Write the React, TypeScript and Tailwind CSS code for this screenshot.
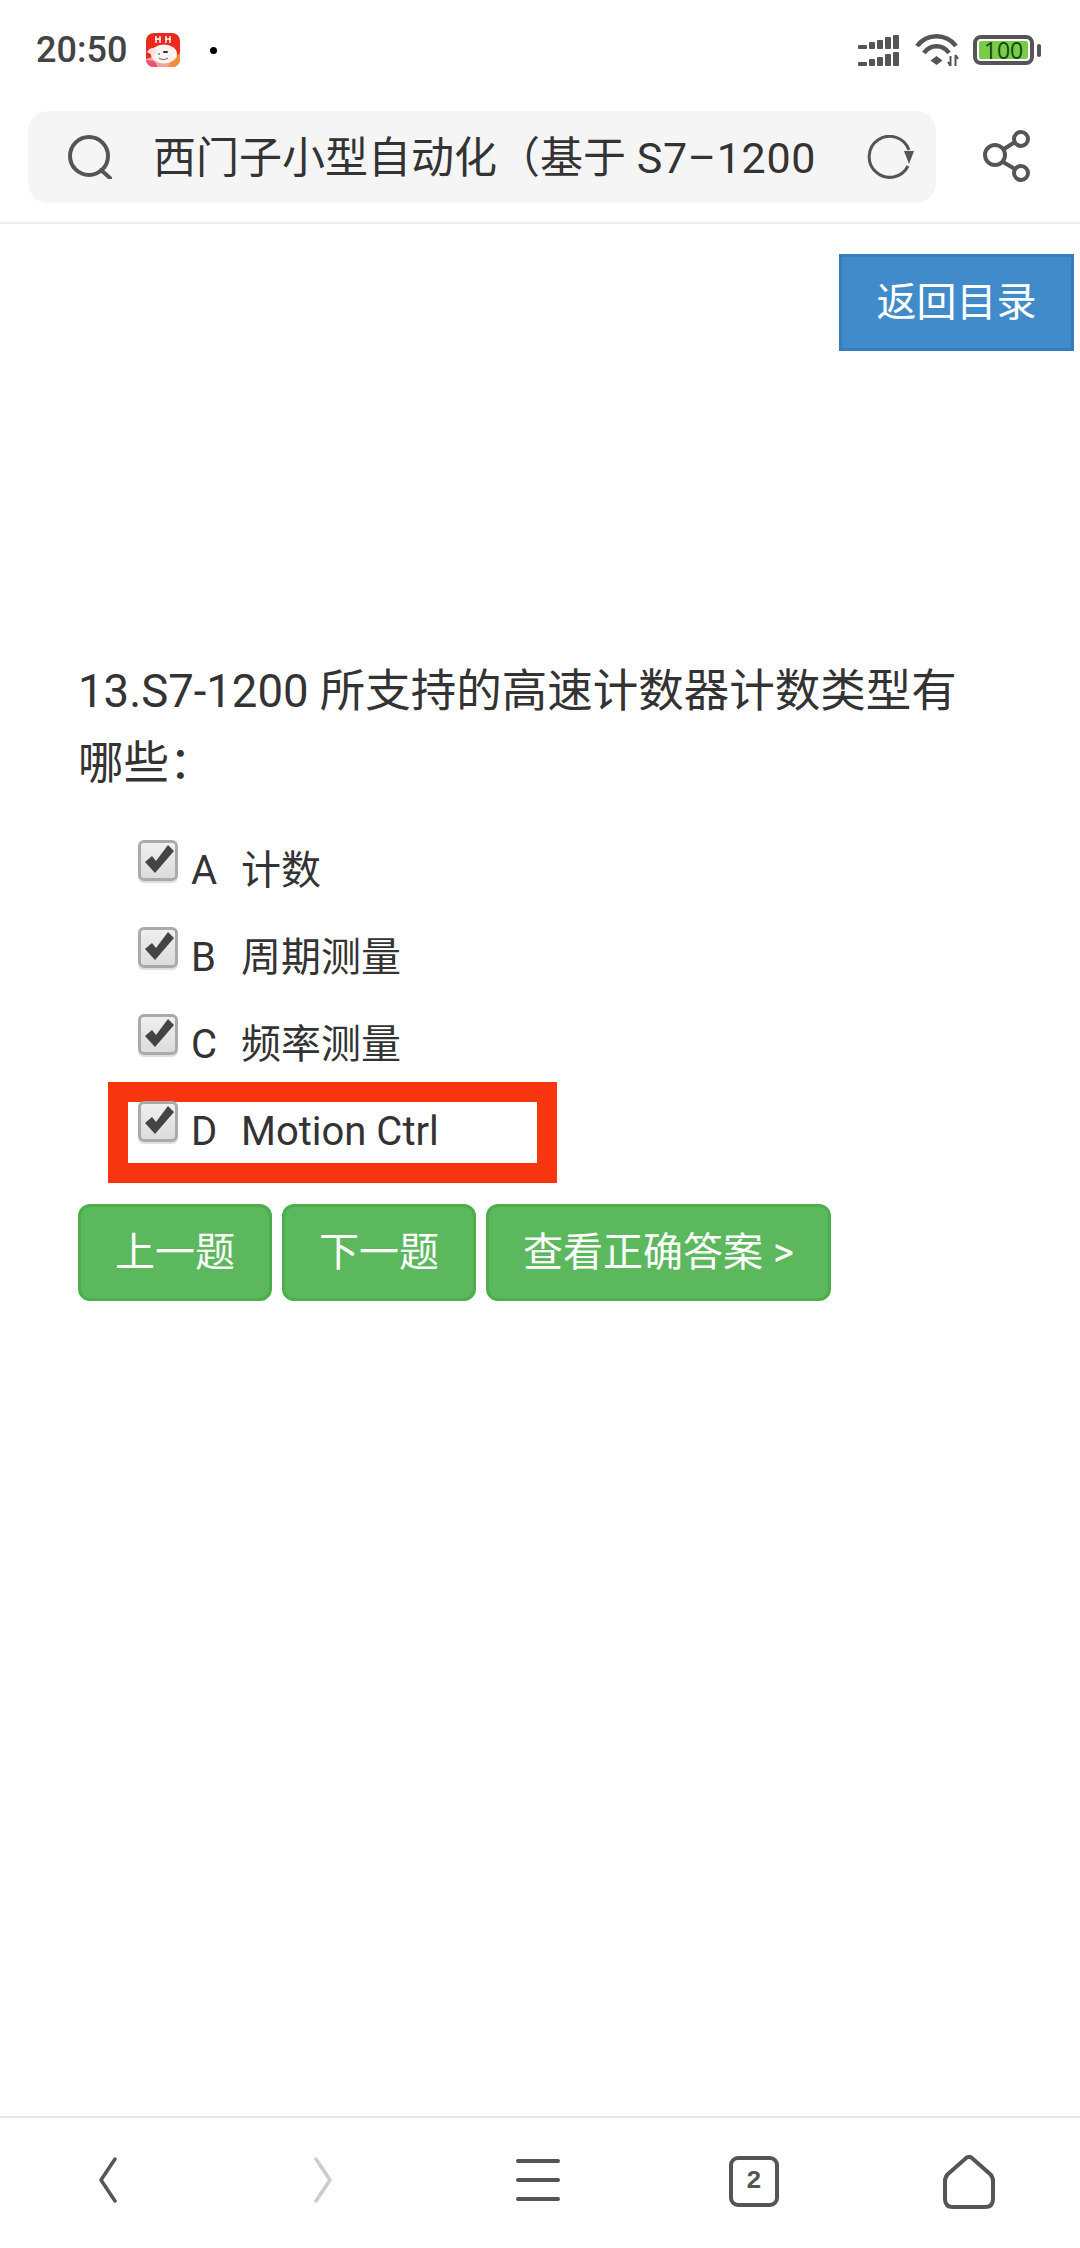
import React from "react";

const font = "font-['Roboto','Noto_Sans_CJK_SC',sans-serif]";

function Signal() {
  const heights = [4, 7, 9, 12, 14];
  const Row = () => (
    <div className="flex items-end gap-[2px] h-[14px]">
      {heights.map((h, i) => (
        <div
          key={i}
          className={`bg-[#555] rounded-[1px] ${i === 0 ? "w-[9px]" : "w-[6px]"}`}
          style={{ height: h }}
        />
      ))}
    </div>
  );
  return (
    <div className="flex flex-col gap-[3px] w-[41px]">
      <Row />
      <Row />
    </div>
  );
}

function Wifi() {
  return (
    <svg width="44" height="33" viewBox="0 0 44 33" fill="none" stroke="#555" strokeWidth="4.5">
      <path d="M2 12 C 12 -1, 31 -1, 41 12" />
      <path d="M9 19 C 15 10, 28 10, 34 19" />
      <path d="M21.5 22 L27.5 26.5 L21.5 31 L15.5 26.5 Z" fill="#555" stroke="none" />
      <path d="M35.5 22 V32 M33 28 L35.5 32 M40.5 21 V32 M40.5 21 L43 25" strokeWidth="2" />
    </svg>
  );
}

function Battery() {
  return (
    <div className="flex items-center gap-[3px]">
      <div className="w-[61px] h-[30px] border-[4px] border-[#555] rounded-[8px] p-[2px]">
        <div className="w-full h-full bg-[#7ccb46] rounded-[2px] flex items-center justify-center text-[23px] leading-none text-[#0b4a12] font-['Open_Sans',sans-serif]">
          100
        </div>
      </div>
      <div className="w-[4px] h-[13px] bg-[#555] rounded-[2px]" />
    </div>
  );
}

function AppIcon() {
  return (
    <svg width="34" height="34" viewBox="0 0 34 34">
      <defs>
        <clipPath id="appclip">
          <rect width="34" height="34" rx="8" />
        </clipPath>
      </defs>
      <g clipPath="url(#appclip)">
        <rect width="34" height="34" fill="#ea2a1c" />
        <path d="M0 26 L12 22 L34 24 V34 H0 Z" fill="#f7a39a" />
        <path d="M26 26 L34 20 V34 H22 Z" fill="#f58a3c" />
        <path d="M0 27 L8 28 L12 34 H0 Z" fill="#ec4f7a" />
        <ellipse cx="18" cy="21" rx="13" ry="9.5" fill="#fbf3f0" />
        <path d="M1 19 C 4 14, 9 14, 11 18 L 8 23 Z" fill="#fbe0dc" />
        <path d="M10 3 V10 M14 3 V10 M9 6 H15 M20 3 V10 M24 3 V10 M19 6 H25" stroke="#fff" strokeWidth="1.4" fill="none" />
        <rect x="17" y="18" width="5" height="2" rx="1" fill="#333" />
        <circle cx="13" cy="21" r="0.8" fill="#333" />
        <path d="M13 25 C 16 27, 19 27, 22 25" stroke="#333" strokeWidth="0.8" fill="none" />
      </g>
    </svg>
  );
}

function SearchIcon() {
  return (
    <svg width="44" height="44" viewBox="0 0 44 44" fill="none" stroke="#555" strokeWidth="4" strokeLinecap="round">
      <circle cx="21" cy="21" r="19" />
      <path d="M33 35 L42 43" />
    </svg>
  );
}

function ReloadIcon() {
  return (
    <svg width="48" height="44" viewBox="0 0 48 44" fill="none">
      <path d="M43 15 A 20.5 20.5 0 1 0 42 31" stroke="#555" strokeWidth="3" />
      <path d="M38 16 L48 16 L43 29 Z" fill="#555" />
    </svg>
  );
}

function ShareIcon() {
  return (
    <svg width="48" height="52" viewBox="0 0 48 52" fill="none" stroke="#555" strokeWidth="4">
      <circle cx="12" cy="25" r="10" />
      <circle cx="38" cy="9" r="7" />
      <circle cx="38" cy="43" r="7" />
      <path d="M21 19 L32 12 M20 32 L32 39" />
    </svg>
  );
}

function CheckBox() {
  return (
    <div className="relative w-[40px] h-[41px] shrink-0 rounded-[6px] border-[3px] border-[#aaa] bg-gradient-to-b from-[#efefef] to-[#dcdcdc] shadow-[0_2px_1px_#ddd]">
      <svg className="absolute -left-[3px] -top-[3px]" width="40" height="41" viewBox="0 0 40 41">
        <path d="M7 22 L14 16 L18 21 L30 5 L36 11 L17 33 Z" fill="#444" />
      </svg>
    </div>
  );
}

function Option({ letter, label, marked }: { letter: string; label: string; marked?: boolean }) {
  return (
    <li className="relative flex items-start h-[87px]">
      {marked && (
        <div className="absolute -left-[30px] -top-[4px] w-[449px] h-[101px] border-[20px] border-[#f7350f]" />
      )}
      <div className="relative mt-[15px]">
        <CheckBox />
      </div>
      <span className="relative ml-[13px] mt-[2px] w-[50px] text-[40px] leading-[87px] text-[#333]">{letter}</span>
      <span className="relative mt-[2px] text-[40px] leading-[87px] text-[#333]">{label}</span>
    </li>
  );
}

function GreenButton({ children }: { children: React.ReactNode }) {
  return (
    <button className="h-[97px] px-[34px] bg-[#5cb85c] border-[3px] border-[#4cae4c] rounded-[12px] text-white text-[40px] whitespace-nowrap">
      {children}
    </button>
  );
}

export default function App() {
  return (
    <div className={`w-[1080px] h-[2248px] bg-white flex flex-col ${font}`}>
      {/* status bar */}
      <div className="h-[111px] shrink-0 flex items-start pt-[33px] pl-[36px] pr-[39px]">
        <span className="w-[110px] h-[34px] text-[36px] leading-[34px] font-medium text-[#444]">20:50</span>
        <AppIcon />
        <div className="ml-[30px] mt-[14px] w-[7px] h-[7px] rounded-full bg-black" />
        <div className="ml-auto flex items-start">
          <div className="mt-[2px]">
            <Signal />
          </div>
          <div className="ml-[16px] mt-[1px]">
            <Wifi />
          </div>
          <div className="ml-[14px] mt-[2px]">
            <Battery />
          </div>
        </div>
      </div>

      {/* address bar */}
      <div className="h-[113px] shrink-0 border-b-[2px] border-[#eeeeee] pl-[28px] flex items-start">
        <div className="w-[908px] h-[92px] bg-[#f5f5f5] rounded-[20px] flex items-center pl-[40px] pr-[22px]">
          <SearchIcon />
          <span className="ml-[41px] mt-[2px] flex-1 text-[43px] leading-none text-[#333] whitespace-nowrap">
            西门子小型自动化（基于 <span className="tracking-[0.7px]">S7–1200</span>
          </span>
          <ReloadIcon />
        </div>
        <div className="ml-[47px] mt-[19px]">
          <ShareIcon />
        </div>
      </div>

      {/* content */}
      <div className="flex-1 flex flex-col">
        <button className="self-end mr-[6px] mt-[30px] w-[235px] h-[97px] bg-[#428bca] border-[3px] border-[#357ebd] text-white text-[40px]">
          返回目录
        </button>
        <div className="mt-[305px] pl-[78px] pr-[90px] text-[45.5px] leading-[72px] text-[#333]">
          13.S7-1200 所支持的高速计数器计数类型有哪些：
        </div>
        <ul className="mt-[25px] ml-[138px]">
          <Option letter="A" label="计数" />
          <Option letter="B" label="周期测量" />
          <Option letter="C" label="频率测量" />
          <Option letter="D" label="Motion Ctrl" marked />
        </ul>
        <div className="mt-[31px] ml-[78px] flex gap-[10px]">
          <GreenButton>上一题</GreenButton>
          <GreenButton>下一题</GreenButton>
          <GreenButton>查看正确答案 &gt;</GreenButton>
        </div>
      </div>

      {/* bottom nav */}
      <div className="h-[132px] shrink-0 border-t-[2px] border-[#e6e6e6] grid grid-cols-5 items-center pb-[6px] pr-[3px]">
        <div className="flex justify-center">
          <svg width="20" height="46" viewBox="0 0 20 46" fill="none" stroke="#555" strokeWidth="3.5" strokeLinecap="round" strokeLinejoin="round">
            <path d="M17 2 L3 23 L17 44" />
          </svg>
        </div>
        <div className="flex justify-center">
          <svg width="20" height="46" viewBox="0 0 20 46" fill="none" stroke="#ccc" strokeWidth="3.5" strokeLinecap="round" strokeLinejoin="round">
            <path d="M3 2 L17 23 L3 44" />
          </svg>
        </div>
        <div className="flex flex-col items-center gap-[15px]">
          <div className="w-[44px] h-[4px] rounded-[2px] bg-[#555]" />
          <div className="w-[44px] h-[4px] rounded-[2px] bg-[#555]" />
          <div className="w-[44px] h-[4px] rounded-[2px] bg-[#555]" />
        </div>
        <div className="flex justify-center">
          <div className="w-[50px] h-[51px] mt-[2px] border-[4px] border-[#555] rounded-[9px] flex items-center justify-center text-[26px] font-bold leading-none text-[#555] font-['Liberation_Mono',monospace]">
            2
          </div>
        </div>
        <div className="flex justify-center">
          <svg className="mt-[4px]" width="52" height="54" viewBox="0 0 52 54" fill="none" stroke="#555" strokeWidth="4" strokeLinejoin="round">
            <path d="M22 4 Q26 0 30 4 L47 19 Q50 22 50 26 V44 Q50 52 42 52 H10 Q2 52 2 44 V26 Q2 22 5 19 Z" />
          </svg>
        </div>
      </div>
    </div>
  );
}
